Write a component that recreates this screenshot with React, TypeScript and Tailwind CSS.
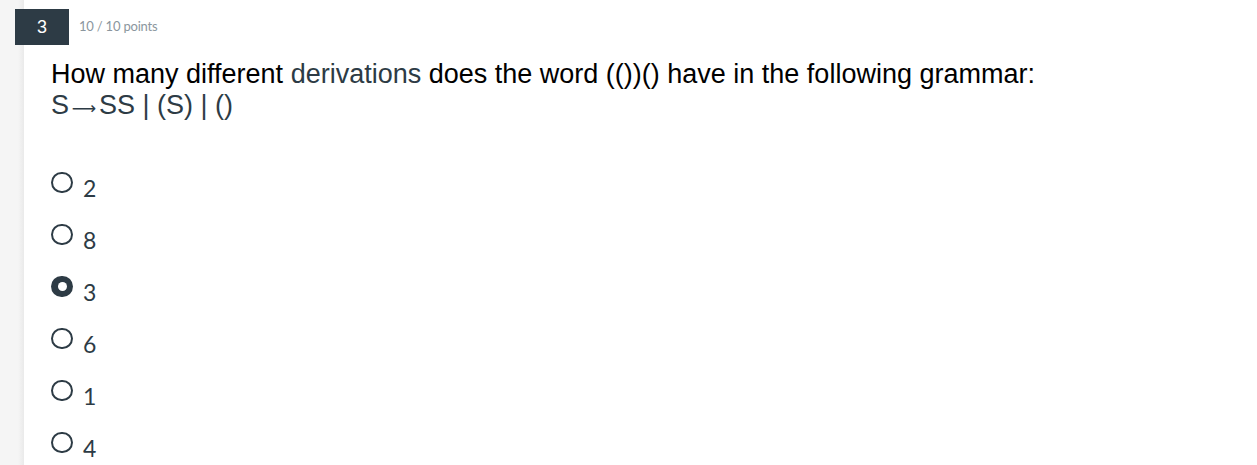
const options = [
  { label: "2", checked: false },
  { label: "8", checked: false },
  { label: "3", checked: true },
  { label: "6", checked: false },
  { label: "1", checked: false },
  { label: "4", checked: false },
];

function Radio({ checked }: { checked: boolean }) {
  return checked ? (
    <span className="flex h-[21px] w-[22px] shrink-0 items-center justify-center rounded-full bg-[#2d3b45]">
      <span className="h-[9px] w-[9px] rounded-full bg-white" />
    </span>
  ) : (
    <span className="h-[21px] w-[22px] shrink-0 rounded-full border-2 border-[#2d3b45] bg-white" />
  );
}

export default function App() {
  return (
    <div className="flex h-[465px] w-full overflow-hidden bg-white">
      <div className="w-[24px] shrink-0 bg-[linear-gradient(to_right,#f5f5f5_75%,#eaeaea)]" />
      <div className="flex-1">
        <div className="ml-[-9px] mt-[9px] flex items-center">
          <div className="flex h-[36px] w-[54px] items-center justify-center bg-[#2d3b45] font-['Liberation_Sans',Arial,sans-serif] text-[18px] text-white">
            3
          </div>
          <span className="ml-[10px] font-['Lato',sans-serif] text-[13px] tracking-[-0.2px] text-[#8b969e]">
            10 / 10 points
          </span>
        </div>
        <div className="ml-[27px] mt-[14px] font-['Liberation_Sans',Arial,sans-serif] text-[27px] leading-[31px] text-black">
          <p>
            How many different <span className="text-[#2d3b45]">derivations</span> does the word (())() have in the following grammar:
          </p>
          <p className="h-[31px] text-[#2d3b45]">
            S
            <span className="inline-block w-[30px] text-center font-['DejaVu_Sans',sans-serif] text-[17px] leading-none">⟶</span>
            SS | (S) | ()
          </p>
        </div>
        <div className="ml-[27px] mt-[51px] flex flex-col gap-[31px] font-['Lato',sans-serif]">
          {options.map((o) => (
            <div key={o.label} className="flex h-[21px] items-start">
              <Radio checked={o.checked} />
              <span className="ml-[10px] mt-[5px] text-[23px] leading-none text-[#2d3b45]">{o.label}</span>
            </div>
          ))}
        </div>
      </div>
    </div>
  );
}
